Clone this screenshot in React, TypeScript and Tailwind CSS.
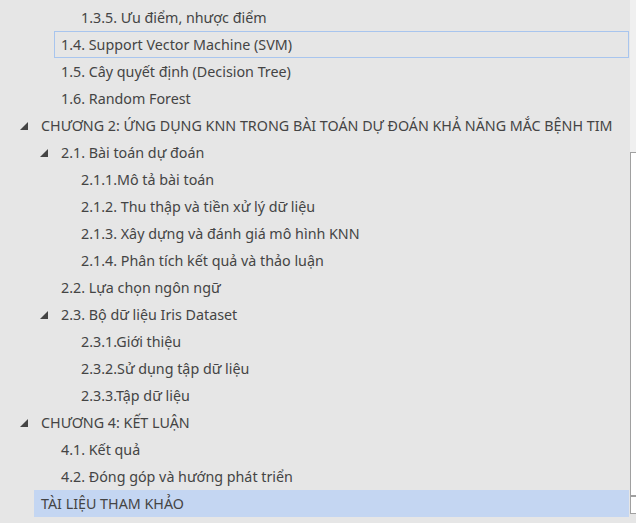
import React from "react";

type Item = { text: string; level: number; tri?: boolean; hover?: boolean; selected?: boolean };

const items: Item[] = [
  { text: "1.3.5. Ưu điểm, nhược điểm", level: 3 },
  { text: "1.4. Support Vector Machine (SVM)", level: 2, hover: true },
  { text: "1.5. Cây quyết định (Decision Tree)", level: 2 },
  { text: "1.6. Random Forest", level: 2 },
  { text: "CHƯƠNG 2: ỨNG DỤNG KNN TRONG BÀI TOÁN DỰ ĐOÁN KHẢ NĂNG MẮC BỆNH TIM", level: 1, tri: true },
  { text: "2.1. Bài toán dự đoán", level: 2, tri: true },
  { text: "2.1.1.Mô tả bài toán", level: 3 },
  { text: "2.1.2. Thu thập và tiền xử lý dữ liệu", level: 3 },
  { text: "2.1.3. Xây dựng và đánh giá mô hình KNN", level: 3 },
  { text: "2.1.4. Phân tích kết quả và thảo luận", level: 3 },
  { text: "2.2. Lựa chọn ngôn ngữ", level: 2 },
  { text: "2.3. Bộ dữ liệu Iris Dataset", level: 2, tri: true },
  { text: "2.3.1.Giới thiệu", level: 3 },
  { text: "2.3.2.Sử dụng tập dữ liệu", level: 3 },
  { text: "2.3.3.Tập dữ liệu", level: 3 },
  { text: "CHƯƠNG 4: KẾT LUẬN", level: 1, tri: true },
  { text: "4.1. Kết quả", level: 2 },
  { text: "4.2. Đóng góp và hướng phát triển", level: 2 },
  { text: "TÀI LIỆU THAM KHẢO", level: 1, selected: true },
];

const indentClass: Record<number, string> = {
  1: "pl-[20px]",
  2: "pl-[40px]",
  3: "pl-[60px]",
};

function Triangle() {
  return (
    <svg width="8" height="8" viewBox="0 0 8 8" className="block">
      <polygon points="8,0 8,8 0,8" fill="#444444" />
    </svg>
  );
}

export default function App() {
  return (
    <div
      className="flex h-[523px] w-[636px] overflow-hidden bg-[#e6e6e6] text-[#444444]"
      style={{ fontFamily: '"Noto Sans", "Open Sans", sans-serif' }}
    >
      <div className="flex w-[630px] flex-col pt-[4px]">
        {items.map((it, i) => (
          <div key={i} className={`flex h-[27px] items-stretch pr-[1px] ${indentClass[it.level]}`}>
            <div className="flex w-[14px] shrink-0 items-center pt-[1px]">{it.tri ? <Triangle /> : null}</div>
            <div
              className={`flex flex-1 items-center whitespace-nowrap border pl-[6px] pt-[1px] text-[14.3px] ${
                it.hover
                  ? "border-[#a8c5ee]"
                  : it.selected
                  ? "border-[#c4d6f2] bg-[#c4d6f2]"
                  : "border-transparent"
              }`}
            >
              {it.text}
            </div>
          </div>
        ))}
      </div>
      <div className="flex w-[6px] flex-col">
        <div className="h-[152px] bg-[#f0f0f0]" />
        <div className="h-[343px] border-l border-t border-[#a0a0a0] bg-white" />
        <div className="h-[2px] bg-[#a0a0a0]" />
        <div className="h-[17px] border-b border-l border-[#a0a0a0] bg-white" />
        <div className="flex-1 bg-[#e6e6e6]" />
      </div>
    </div>
  );
}
